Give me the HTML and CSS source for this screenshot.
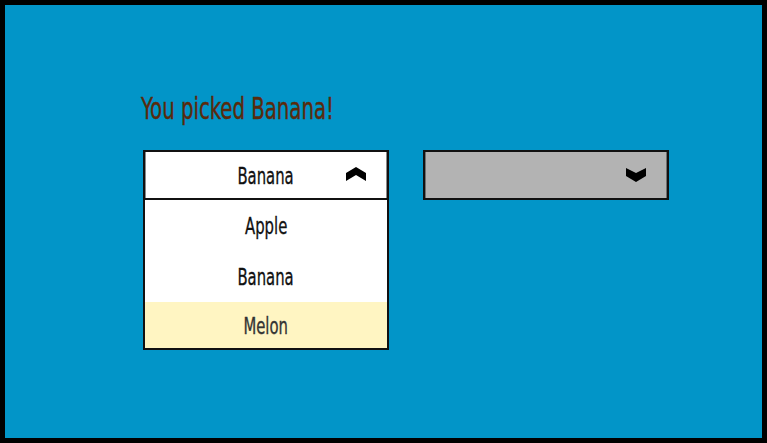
FILE: index.html
```html
<!DOCTYPE html>
<html>
<head>
<meta charset="utf-8">
<link rel="stylesheet" href="styles.css">
</head>
<body>
<div class="frame">
  <h1 class="title"><span class="txt">You picked Banana!</span></h1>
  <div class="row">
    <div class="select open">
      <div class="select-head">
        <span class="txt">Banana</span>
        <svg class="chev up" width="20" height="14" viewBox="0 0 20 14"><polygon points="0,6 10,0 20,6 20,14 10,8 0,14" fill="#000"/></svg>
      </div>
      <ul class="options">
        <li class="option"><span class="txt">Apple</span></li>
        <li class="option"><span class="txt">Banana</span></li>
        <li class="option hover"><span class="txt">Melon</span></li>
      </ul>
    </div>
    <div class="select disabled">
      <div class="select-head">
        <svg class="chev down" width="20" height="14" viewBox="0 0 20 14"><polygon points="0,0 10,5 20,0 20,8 10,14 0,8" fill="#000"/></svg>
      </div>
    </div>
  </div>
</div>
</body>
</html>
```
FILE: styles.css
```css
html, body { margin: 0; padding: 0; }
body { font-family: "DejaVu Sans Condensed", "DejaVu Sans", sans-serif; }
.frame {
  width: 767px; height: 443px; box-sizing: border-box;
  border: 5px solid #000;
  background: #0295c8;
  padding: 84px 0 0 136px;
}
.txt { display: inline-block; transform: translateY(1px) scale(0.75, 1.04); }
.title {
  margin: 0;
  font-weight: normal;
  font-size: 30px;
  line-height: 40px;
  color: #5a2a0c;
}
.title .txt { transform-origin: 0 50%; transform: scale(0.73, 1.03); -webkit-text-stroke: 0.4px #5a2a0c; }
.row { display: flex; gap: 34px; margin-top: 21px; margin-left: 2px; align-items: flex-start; }
.select { width: 246px; }
.select-head {
  height: 50px; box-sizing: border-box;
  border: 2px solid #111;
  background: #fff;
  box-shadow: inset 1px 0 #8a8a8a, inset -1px 0 #8a8a8a;
  display: flex; align-items: center; justify-content: center; position: relative;
  font-size: 22px; color: #111;
}
.chev { position: absolute; right: 21px; }
.chev.up { top: 15px; }
.chev.down { top: 16px; }
.disabled .select-head { background: #b3b3b3; box-shadow: inset 1px 0 #6e6e6e, inset -1px 0 #6e6e6e; }
.options {
  list-style: none; margin: 0; padding: 0;
  border: 2px solid #111; border-top: none;
  background: #fff;
}
.option {
  height: 51px; display: flex; align-items: center; justify-content: center;
  font-size: 22px; color: #111;
}
.option:last-child { height: 46px; }
.option .txt, .select-head .txt { -webkit-text-stroke: 0.3px currentColor; }
.option.hover { background: #fff5c2; color: #333; }
```
